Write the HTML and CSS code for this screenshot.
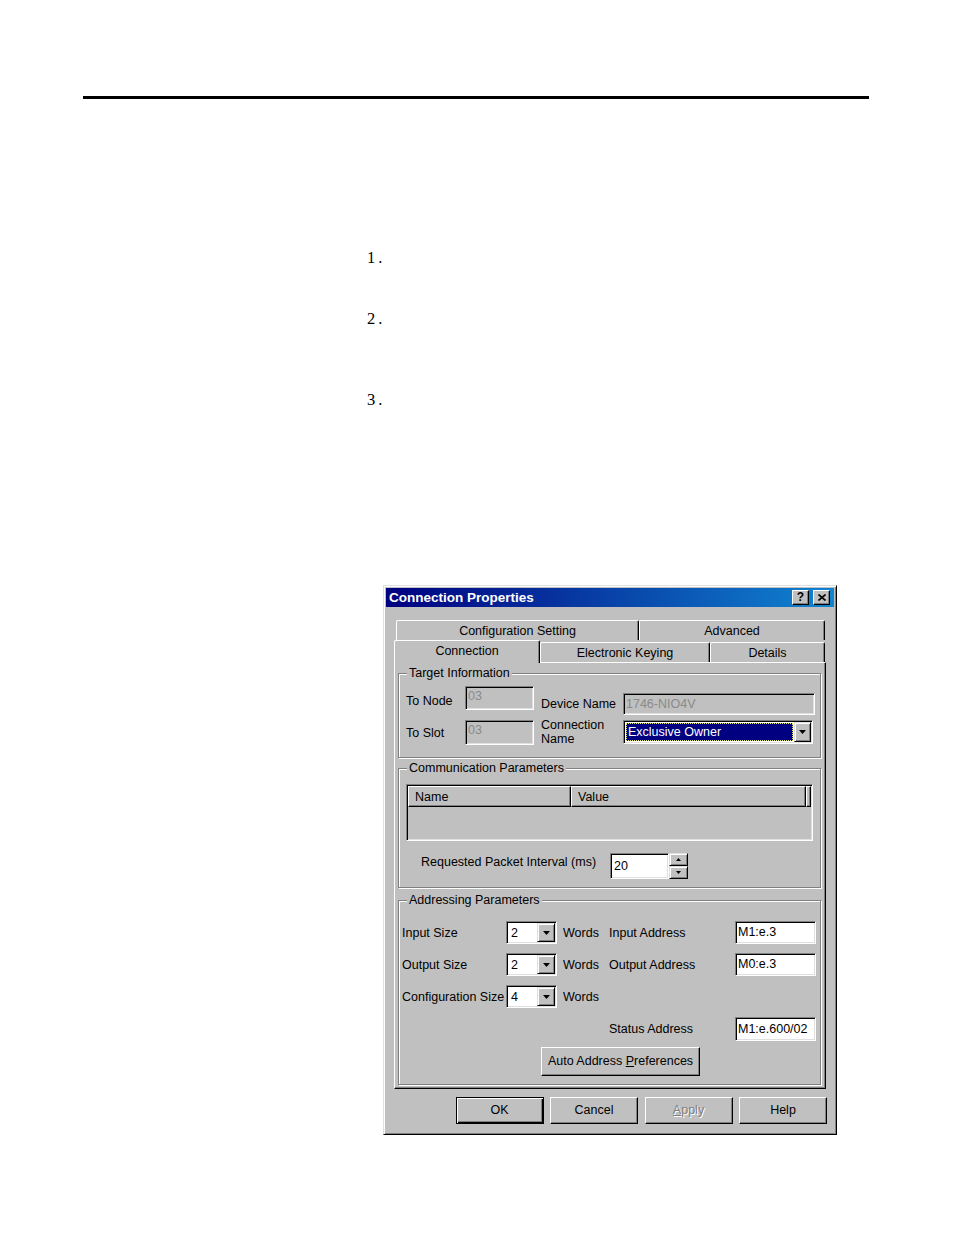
FILE: index.html
```html
<!DOCTYPE html>
<html>
<head>
<meta charset="utf-8">
<link rel="stylesheet" href="styles.css">
</head>
<body>
<div class="page">
  <div class="rule"></div>
  <ol class="steps">
    <li class="step step1">1.</li>
    <li class="step step2">2.</li>
    <li class="step step3">3.</li>
  </ol>

  <div class="dialog">
    <div class="titlebar">
      <span class="title">Connection Properties</span>
      <span class="tbtn tbtn-help">?</span>
      <span class="tbtn tbtn-close"><svg width="8" height="7" viewBox="0 0 8 7"><path d="M0.5 0.5L7.5 6.5M7.5 0.5L0.5 6.5" stroke="#000" stroke-width="1.6" fill="none"/></svg></span>
    </div>

    <div class="dlg-body">
      <div class="tabs-back">
        <div class="tab tab-config">Configuration Setting</div>
        <div class="tab tab-adv">Advanced</div>
      </div>
      <div class="tabs-front">
        <div class="tab tab-sel">Connection</div>
        <div class="tab tab-keying">Electronic Keying</div>
        <div class="tab tab-details">Details</div>
      </div>

      <div class="panel">
        <div class="group g-target">
          <span class="legend">Target Information</span>
          <div class="target-grid">
            <span class="lbl node-lbl">To Node</span>
            <div class="field disabled node-in">03</div>
            <span class="lbl dev-lbl">Device Name</span>
            <div class="field disabled dev-in">1746-NIO4V</div>
            <span class="lbl slot-lbl">To Slot</span>
            <div class="field disabled slot-in">03</div>
            <span class="lbl conn-lbl">Connection<br>Name</span>
            <div class="combo conn-combo">
              <span class="combo-sel">Exclusive Owner</span>
              <span class="dd-btn"><svg width="7" height="4" viewBox="0 0 7 4"><polygon points="0,0 7,0 3.5,4" fill="#000"/></svg></span>
            </div>
          </div>
        </div>

        <div class="group g-comm">
          <span class="legend">Communication Parameters</span>
          <div class="listview">
            <div class="lv-header">
              <div class="lv-col lv-name">Name</div>
              <div class="lv-col lv-value">Value</div>
              <div class="lv-col lv-rest"></div>
            </div>
          </div>
          <div class="rpi-row">
            <span class="lbl rpi-lbl">Requested Packet Interval (ms)</span>
            <div class="field rpi-in">20</div>
            <div class="spin">
              <span class="spin-btn"><svg width="5" height="3" viewBox="0 0 5 3"><polygon points="0,3 5,3 2.5,0" fill="#000"/></svg></span>
              <span class="spin-btn"><svg width="5" height="3" viewBox="0 0 5 3"><polygon points="0,0 5,0 2.5,3" fill="#000"/></svg></span>
            </div>
          </div>
        </div>

        <div class="group g-addr">
          <span class="legend">Addressing Parameters</span>
          <div class="addr-grid">
            <span class="lbl a-lbl">Input Size</span>
            <div class="combo small-combo"><span class="combo-val">2</span><span class="dd-btn"><svg width="7" height="4" viewBox="0 0 7 4"><polygon points="0,0 7,0 3.5,4" fill="#000"/></svg></span></div>
            <span class="lbl words">Words</span>
            <span class="lbl a-lbl2">Input Address</span>
            <div class="field addr-in">M1:e.3</div>

            <span class="lbl a-lbl">Output Size</span>
            <div class="combo small-combo"><span class="combo-val">2</span><span class="dd-btn"><svg width="7" height="4" viewBox="0 0 7 4"><polygon points="0,0 7,0 3.5,4" fill="#000"/></svg></span></div>
            <span class="lbl words">Words</span>
            <span class="lbl a-lbl2">Output Address</span>
            <div class="field addr-in">M0:e.3</div>

            <span class="lbl a-lbl">Configuration Size</span>
            <div class="combo small-combo"><span class="combo-val">4</span><span class="dd-btn"><svg width="7" height="4" viewBox="0 0 7 4"><polygon points="0,0 7,0 3.5,4" fill="#000"/></svg></span></div>
            <span class="lbl words">Words</span>
            <span class="cell-empty"></span>
            <span class="cell-empty"></span>

            <span class="cell-empty"></span>
            <span class="cell-empty"></span>
            <span class="cell-empty"></span>
            <span class="lbl a-lbl2">Status Address</span>
            <div class="field addr-in">M1:e.600/02</div>
          </div>
          <div class="btn auto-btn">Auto Address <u>P</u>references</div>
        </div>
      </div>

      <div class="btn-row">
        <div class="btn btn-default">OK</div>
        <div class="btn">Cancel</div>
        <div class="btn btn-disabled"><u>A</u>pply</div>
        <div class="btn">Help</div>
      </div>
    </div>
  </div>
</div>
</body>
</html>
```

FILE: styles.css
```css
html, body {
  margin: 0;
  padding: 0;
  background: #fff;
}

.page {
  width: 954px;
  display: flex;
  flex-direction: column;
  align-items: flex-start;
}

.rule {
  margin: 96px 0 0 83px;
  width: 786px;
  height: 3px;
  background: #000;
}

.steps {
  list-style: none;
  margin: 0 0 0 367px;
  padding: 0;
  font-family: "Liberation Serif", "Times New Roman", serif;
  font-size: 16.5px;
  letter-spacing: 3px;
  line-height: 18px;
  color: #000;
}

.step { height: 18px; }
.step1 { margin-top: 150px; }
.step2 { margin-top: 43px; }
.step3 { margin-top: 63px; }

/* ---------- dialog ---------- */
.dialog {
  margin: 176px 0 0 383px;
  width: 454px;
  height: 550px;
  box-sizing: border-box;
  background: #c0c0c0;
  border: 1px solid;
  border-color: #dfdfdf #000 #000 #dfdfdf;
  box-shadow: inset 1px 1px #fff, inset -1px -1px #808080;
  padding: 2px;
  font-family: "Liberation Sans", Arial, sans-serif;
  font-size: 12.5px;
  color: #000;
}

.titlebar {
  height: 19px;
  display: flex;
  align-items: center;
  background: linear-gradient(to right, #000080, #1084d0);
  padding-left: 3px;
  padding-right: 4px;
}

.title {
  flex: 1;
  color: #fff;
  font-weight: bold;
  font-size: 13.5px;
  line-height: 19px;
  white-space: nowrap;
}

.tbtn {
  width: 17px;
  height: 15px;
  box-sizing: border-box;
  background: #c0c0c0;
  border: 1px solid;
  border-color: #fff #000 #000 #fff;
  box-shadow: inset -1px -1px #808080;
  display: flex;
  align-items: center;
  justify-content: center;
  font-weight: bold;
  font-size: 12px;
  line-height: 13px;
}

.tbtn-help { margin-right: 4px; }

.dlg-body {
  padding: 13px 7px 0 8px;
}

/* tabs */
.tabs-back {
  display: flex;
  margin-left: 2px;
  height: 20px;
}

.tabs-front {
  display: flex;
  align-items: flex-end;
  height: 22px;
}

.tab {
  box-sizing: border-box;
  background: #c0c0c0;
  border-left: 1px solid #fff;
  border-top: 1px solid #fff;
  border-right: 1px solid #000;
  border-radius: 2px 2px 0 0;
  box-shadow: inset -1px 0 #808080;
  text-align: center;
  white-space: nowrap;
}

.tab-config { width: 243px; height: 20px; line-height: 21px; }
.tab-adv { width: 186px; height: 20px; line-height: 21px; }

.tab-sel {
  width: 146px;
  height: 23px;
  margin-bottom: -1px;
  line-height: 20px;
  position: relative;
  z-index: 2;
}

.tab-keying { width: 170px; height: 20px; line-height: 20px; }
.tab-details { width: 115px; height: 20px; line-height: 20px; }

.panel {
  width: 432px;
  height: 427px;
  box-sizing: border-box;
  border: 1px solid;
  border-color: #fff #000 #000 #fff;
  box-shadow: inset -1px -1px #808080;
  display: flex;
  flex-direction: column;
  align-items: flex-start;
}

/* group boxes */
.group {
  position: relative;
  margin-left: 3px;
  width: 423px;
  box-sizing: border-box;
  border: 1px solid #808080;
  box-shadow: inset 1px 1px #fff, 1px 1px #fff;
}

.legend {
  position: absolute;
  top: -8px;
  left: 8px;
  padding: 0 2px;
  background: #c0c0c0;
  line-height: 14px;
  white-space: nowrap;
}

.g-target { margin-top: 10px; height: 85px; }
.g-comm { margin-top: 10px; height: 120px; }
.g-addr { margin-top: 12px; height: 185px; }

.lbl {
  white-space: nowrap;
  line-height: 14px;
}

/* sunken fields */
.field, .combo, .listview {
  box-sizing: border-box;
  border: 1px solid;
  border-color: #808080 #fff #fff #808080;
  box-shadow: inset 1px 1px #000, inset -1px -1px #dfdfdf;
  padding: 1px;
  background: #fff;
  white-space: nowrap;
  overflow: hidden;
}

.field.disabled {
  background: #c0c0c0;
  color: #8a8a8a;
}

/* target information */
.target-grid {
  display: grid;
  grid-template-columns: 66px 69px 89px 192px;
  row-gap: 5px;
  padding-top: 12px;
}

.node-lbl, .slot-lbl {
  padding-left: 7px;
  align-self: center;
}

.dev-lbl, .conn-lbl { padding-left: 7px; }

.node-in { height: 24px; padding-left: 2px; line-height: 17px; }
.slot-in { height: 25px; padding-left: 2px; line-height: 17px; }

.dev-lbl {
  margin-top: 7px;
  height: 22px;
  line-height: 22px;
}

.dev-in {
  margin-top: 7px;
  height: 22px;
  line-height: 18px;
  padding-left: 2px;
}

.conn-lbl { margin-top: -2px; }

.conn-combo {
  width: 190px;
  height: 24px;
  display: flex;
}

.combo { display: flex; }

.combo-sel {
  flex: 1;
  margin: 1px;
  box-sizing: border-box;
  background: #000080;
  color: #fff;
  border: 1px dotted #e8e870;
  padding-left: 1px;
  line-height: 16px;
}

.dd-btn {
  width: 17px;
  box-sizing: border-box;
  background: #c0c0c0;
  border: 1px solid;
  border-color: #dfdfdf #000 #000 #dfdfdf;
  box-shadow: inset 1px 1px #fff, inset -1px -1px #808080;
  display: flex;
  align-items: center;
  justify-content: center;
}

/* communication parameters */
.listview {
  margin: 15px 0 0 7px;
  width: 407px;
  height: 57px;
  background: #c0c0c0;
}

.lv-header {
  display: flex;
  height: 21px;
}

.lv-col {
  box-sizing: border-box;
  height: 21px;
  border: 1px solid;
  border-color: #fff #000 #000 #fff;
  box-shadow: inset -1px -1px #808080;
  line-height: 20px;
  white-space: nowrap;
}

.lv-name { width: 163px; padding-left: 6px; }
.lv-value { width: 235px; padding-left: 6px; }
.lv-rest { width: 5px; }

.rpi-row {
  display: flex;
  align-items: flex-start;
  margin-top: 12px;
}

.rpi-lbl {
  margin: 2px 0 0 22px;
  width: 189px;
}

.rpi-in {
  width: 59px;
  height: 26px;
  line-height: 22px;
  padding-left: 3px;
}

.spin {
  width: 19px;
  display: flex;
  flex-direction: column;
}

.spin-btn {
  height: 13px;
  box-sizing: border-box;
  background: #c0c0c0;
  border: 1px solid;
  border-color: #dfdfdf #000 #000 #dfdfdf;
  box-shadow: inset 1px 1px #fff, inset -1px -1px #808080;
  display: flex;
  align-items: center;
  justify-content: center;
}

/* addressing parameters */
.addr-grid {
  display: grid;
  grid-template-columns: 107px 51px 52px 126px 81px;
  grid-template-rows: 23px 23px 23px 24px;
  row-gap: 9px;
  padding-top: 20px;
}

.addr-grid .lbl { align-self: center; }
.a-lbl { padding-left: 3px; }
.words { padding-left: 6px; }

.small-combo { height: 23px; }

.combo-val {
  flex: 1;
  padding-left: 3px;
  line-height: 20px;
}

.small-combo .dd-btn { width: 18px; }

.addr-in {
  height: 23px;
  line-height: 19px;
  padding-left: 2px;
}

.addr-grid > .addr-in:last-child { height: 24px; line-height: 20px; }

/* buttons */
.btn {
  box-sizing: border-box;
  background: #c0c0c0;
  border: 1px solid;
  border-color: #fff #000 #000 #fff;
  box-shadow: inset -1px -1px #808080;
  text-align: center;
  white-space: nowrap;
  width: 88px;
  height: 27px;
  line-height: 25px;
}

.auto-btn {
  margin: 6px 0 0 142px;
  width: 159px;
  height: 29px;
  line-height: 27px;
}

.btn-row {
  display: flex;
  justify-content: flex-end;
  gap: 6.5px;
  margin-top: 8px;
}

.btn-default {
  border-color: #000;
  box-shadow: inset 1px 1px #fff, inset -1px -1px #000, inset -2px -2px #808080;
}

.btn-disabled {
  color: #808080;
  text-shadow: 1px 1px #fff;
}
```
